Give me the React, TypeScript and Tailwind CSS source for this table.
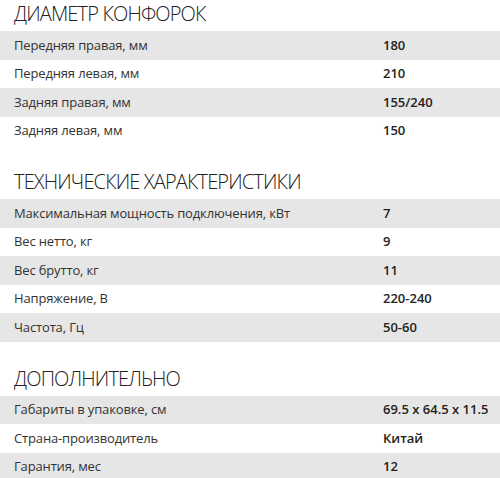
const SECTIONS = [
  {
    title: "ДИАМЕТР КОНФОРОК",
    rows: [
      ["Передняя правая, мм", "180"],
      ["Передняя левая, мм", "210"],
      ["Задняя правая, мм", "155/240"],
      ["Задняя левая, мм", "150"],
    ],
  },
  {
    title: "ТЕХНИЧЕСКИЕ ХАРАКТЕРИСТИКИ",
    rows: [
      ["Максимальная мощность подключения, кВт", "7"],
      ["Вес нетто, кг", "9"],
      ["Вес брутто, кг", "11"],
      ["Напряжение, В", "220-240"],
      ["Частота, Гц", "50-60"],
    ],
  },
  {
    title: "ДОПОЛНИТЕЛЬНО",
    rows: [
      ["Габариты в упаковке, см", "69.5 x 64.5 x 11.5"],
      ["Страна-производитель", "Китай"],
      ["Гарантия, мес", "12"],
    ],
  },
]

export default function App() {
  return (
    <div className="w-[500px] h-[478px] overflow-hidden bg-white font-['Open_Sans',sans-serif]">
      {SECTIONS.map((section, si) => (
        <div key={si} className={si > 0 ? "mt-[23px]" : ""}>
          <h2 className="flex items-start h-[31px] pl-[14px] pt-[1px] text-[20px] leading-[26px] font-light text-[#222] tracking-[-0.85px]">
            {section.title}
          </h2>
          {section.rows.map(([label, value], ri) => (
            <div
              key={ri}
              className={`grid grid-cols-[369px_1fr] items-center h-[28.5px] pl-[14px] text-[13px] ${
                ri % 2 === 0 ? "bg-[#e6e6e6]" : "bg-white"
              }`}
            >
              <span className="text-[#333] tracking-[-0.15px]">{label}</span>
              <span className="font-semibold text-[#222]">{value}</span>
            </div>
          ))}
        </div>
      ))}
    </div>
  )
}
